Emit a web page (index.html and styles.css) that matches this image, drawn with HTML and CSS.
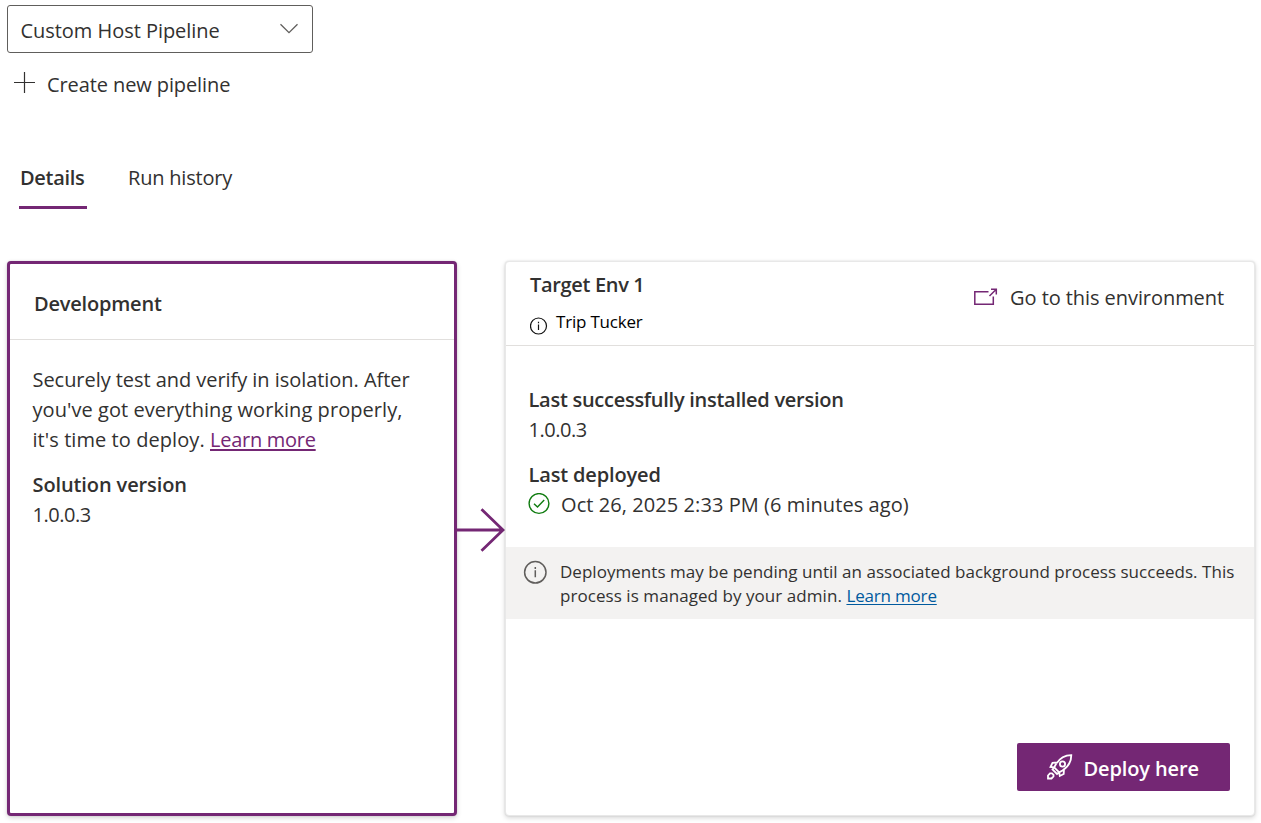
FILE: index.html
```html
<!DOCTYPE html>
<html lang="en">
<head>
<meta charset="utf-8">
<title>Pipelines</title>
<link rel="stylesheet" href="styles.css">
</head>
<body>
<main class="page">
  <div class="select">
    <span class="t-select">Custom Host Pipeline</span>
    <svg class="chevron" width="20" height="12" viewBox="0 0 20 12"><path d="M1.5 1.2L10 9.7L18.5 1.2"/></svg>
  </div>
  <div class="create">
    <svg class="plus" width="22" height="22" viewBox="0 0 22 22"><path d="M10.500 0V21M0 10.500H21"/></svg>
    <span class="t-create">Create new pipeline</span>
  </div>
  <nav class="tabs">
    <div class="tab active"><span class="t-details">Details</span></div>
    <div class="tab"><span class="t-history">Run history</span></div>
  </nav>
  <div class="stages">
    <section class="card source">
      <header class="source-head"><h2 class="t-dev">Development</h2></header>
      <div class="source-body">
        <p><span class="t-p1">Securely test and verify in isolation. After</span><br><span class="t-p2">you've got everything working properly,</span><br><span class="t-p3">it's time to deploy. </span><a class="t-more" href="#">Learn more</a></p>
        <h3 class="t-sol">Solution version</h3>
        <div class="t-ver">1.0.0.3</div>
      </div>
    </section>
    <svg class="arrow" width="48" height="44" viewBox="0 0 48 44"><path d="M0 22H46M24.500 1.200L46 22L24.500 42.800"/></svg>
    <section class="card target">
      <header class="target-head">
        <div class="target-name">
          <h2 class="t-env">Target Env 1</h2>
          <div class="owner">
            <svg class="info-small" width="18" height="18" viewBox="0 0 18 18"><circle cx="8.500" cy="9" r="8"/><path d="M8.500 7.400V13M8.500 4.800V6.200"/></svg>
            <span class="t-owner">Trip Tucker</span>
          </div>
        </div>
        <div class="goto">
          <svg class="open" width="24" height="18" viewBox="0 0 24 18"><path d="M14.5 3.7H.8V16.3H19.3V8.5M15.5 8L22.3 1.2M17 1.2H22.3V6.5"/></svg>
          <span class="t-goto">Go to this environment</span>
        </div>
      </header>
      <div class="target-body">
        <h3 class="t-last">Last successfully installed version</h3>
        <div class="t-ver">1.0.0.3</div>
        <h3 class="t-dep gap">Last deployed</h3>
        <div class="status">
          <svg class="check" width="22" height="22" viewBox="0 0 22 22"><circle cx="11" cy="10.500" r="9.900"/><path d="M6 10.700L9.500 14.100L16.200 7"/></svg>
          <span class="t-date">Oct 26, 2025 2:33 PM (6 minutes ago)</span>
        </div>
      </div>
      <div class="notice">
        <svg class="info" width="24" height="24" viewBox="0 0 24 24"><circle cx="12.300" cy="12.300" r="10.700"/><path d="M12.300 10.300V17.300M12.300 7.100V8.900"/></svg>
        <p><span class="t-n1">Deployments may be pending until an associated background process succeeds. This</span><br><span class="t-n2">process is managed by your admin. </span><a class="t-nmore" href="#">Learn more</a></p>
      </div>
      <footer class="actions">
        <button class="deploy">
          <svg class="rocket" width="26" height="26" viewBox="0 0 26 26"><path d="M24.3 1.2C18 1.2 12.800 4.200 9 10L7.200 13.300L12.200 18.300L15.500 16.500C21.300 12.700 24.300 7.500 24.300 1.200ZM10.500 8.500L5.500 8.800L3.500 13L7.200 13.300M17 15L16.700 20L12.800 22L12.200 18.300M7.200 13.300L5.500 15.500L10 20L12.200 18.300M1 24.500V21.500L3 19.300H5L6.500 20.800V22.500L4.500 24.500Z"/><circle cx="15.500" cy="10" r="2.600"/></svg>
          <span class="t-deploy">Deploy here</span>
        </button>
      </footer>
    </section>
  </div>
</main>
</body>
</html>
```
FILE: styles.css
```css
* { box-sizing: border-box; }
body { margin: 0; background: #fff; color: #323130; font: 20px/30px "Open Sans", "Noto Sans", sans-serif; }
h2, h3, p { margin: 0; font-size: inherit; font-weight: 600; }
p { font-weight: 400; }
span, a, h2, h3 { white-space: pre; }
svg { display: block; flex: none; fill: none; stroke: #323130; stroke-width: 1.3; }
.page { width: 1261px; height: 823px; padding: 5px 6px 0 7px; overflow: hidden; }
.select { width: 306px; height: 48px; border: 1px solid #605e5c; border-radius: 3px; padding: 0 13px 0 12.5px; display: flex; align-items: center; justify-content: space-between; }
.t-select { padding-top: 3px; letter-spacing: -.04px; }
.chevron { stroke: #605e5c; }
.create { display: flex; align-items: center; gap: 11px; height: 30px; margin-top: 17px; padding-left: 7px; }
.plus { margin-top: -4px; stroke-width: 1.2; }
.t-create { letter-spacing: -.1px; }
.tabs { display: flex; gap: 40px; padding-left: 12px; margin-top: 52px; height: 57px; }
.tab { padding: 11px 0 0 1px; height: 57px; }
.tab.active { width: 68px; font-weight: 600; border-bottom: 3px solid #742774; }
.t-details { letter-spacing: -.3px; }
.t-history { letter-spacing: -.2px; }
.stages { display: flex; align-items: flex-start; margin-top: 52px; }
.card { background: #fff; border-radius: 4px; flex: none; box-shadow: 0 2px 5px rgba(0,0,0,.16), 0 0 2px rgba(0,0,0,.12); }
.source { width: 450px; height: 555px; border: 3px solid #742774; }
.source-head { height: 76px; border-bottom: 1px solid #e1dfdd; padding: 25px 0 0 24px; }
.source-body { padding: 25px 0 0 22.5px; }
.source-body h3 { margin-top: 15px; }
.t-dev { letter-spacing: -.2px; }
.t-p1 { letter-spacing: -.05px; }
.t-p2 { letter-spacing: .06px; }
.t-p3 { letter-spacing: .07px; }
.t-sol { letter-spacing: -.11px; }
.t-ver { letter-spacing: -.45px; }
.arrow { margin-top: 247px; stroke: #742774; stroke-width: 2.8; }
.target { width: 750px; height: 555px; border: 1px solid #e8e8e8; display: flex; flex-direction: column; }
.target-head { height: 84px; flex: none; border-bottom: 1px solid #e1dfdd; display: flex; justify-content: space-between; padding: 8px 30px 0 24px; }
.t-env { letter-spacing: -.33px; }
.owner { display: flex; gap: 8px; height: 24px; line-height: 24px; margin-top: 10px; font-size: 17px; color: #000; }
.owner svg { margin-top: 7px; stroke: #111; stroke-width: 1.2; }
.t-owner { letter-spacing: -.2px; }
.goto { display: flex; gap: 12px; height: 30px; margin-top: 13px; }
.t-goto { letter-spacing: -.07px; }
.open { margin-top: 5px; stroke: #742774; stroke-width: 1.5; }
.target-body { height: 201px; flex: none; padding: 39px 0 0 22.5px; }
.t-last { letter-spacing: -.27px; }
.t-dep { letter-spacing: -.15px; }
.t-date { letter-spacing: .07px; }
.gap { margin-top: 15px; }
.status { display: flex; gap: 11px; }
.check { margin-top: 3px; margin-left: -.5px; stroke: #107c10; stroke-width: 1.4; }
.notice { height: 72px; flex: none; background: #f3f2f1; display: flex; gap: 13px; padding: 13px 0 0 17px; font-size: 17px; line-height: 24px; }
.info { stroke: #605e5c; stroke-width: 1.5; }
.t-n1 { letter-spacing: .03px; }
.t-n2 { letter-spacing: .06px; }
a { text-decoration-thickness: 1px; text-underline-offset: 2px; }
.t-more { color: #742774; text-decoration-thickness: 2px; letter-spacing: -.27px; }
.t-nmore { color: #005a9e; letter-spacing: -.18px; }
.actions { margin-top: auto; padding: 0 24px 24px 0; display: flex; justify-content: flex-end; }
.deploy { width: 213px; height: 48px; padding: 0 0 0 30px; border: 0; border-radius: 2px; background: #742774; color: #fff; font: 600 20px/30px "Open Sans", "Noto Sans", sans-serif; display: flex; align-items: center; gap: 10.5px; }
.t-deploy { padding-top: 3px; letter-spacing: -.12px; }
.rocket { stroke: #fff; stroke-width: 1.8; }
```
